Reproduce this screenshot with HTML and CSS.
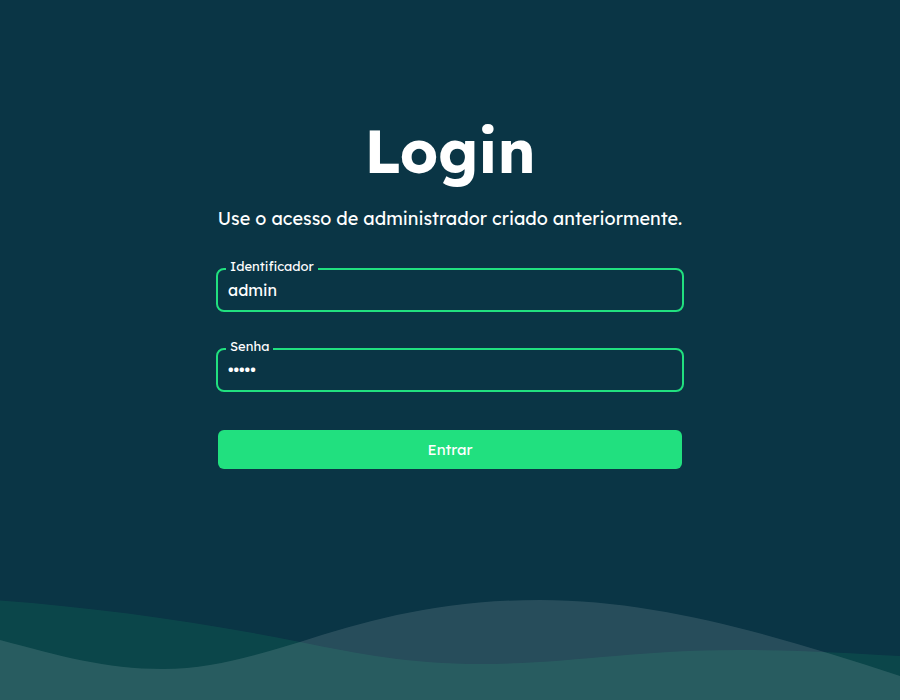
FILE: index.html
```html
<!DOCTYPE html>
<html lang="pt-BR">
<head>
<meta charset="utf-8">
<meta name="viewport" content="width=device-width, initial-scale=1">
<title>Login</title>
<link rel="stylesheet" href="styles.css">
</head>
<body>
<main class="login">
  <h1 class="title">Login</h1>
  <p class="subtitle">Use o acesso de administrador criado anteriormente.</p>
  <form class="form">
    <div class="field">
      <label class="field-label" for="user">Identificador</label>
      <input class="field-input" id="user" type="text" value="admin">
    </div>
    <div class="field">
      <label class="field-label" for="password">Senha</label>
      <input class="field-input" id="password" type="password" value="admin">
    </div>
    <button class="submit" type="button">Entrar</button>
  </form>
</main>
<svg class="waves" viewBox="0 0 900 100" preserveAspectRatio="none" aria-hidden="true">
  <path class="wave-green" d="M0,0.5C100,8 200,22 300,42C360,54 410,64 480,64C570,64 630,50 740,50C800,50 850,53 900,56V100H0Z"/>
  <path class="wave-light" d="M0,40C60,56 105,69 163,69C210,69 250,57 300,42C370,20 440,0 540,0C660,0 780,37 900,76V100H0Z"/>
</svg>
</body>
</html>
```
FILE: styles.css
```css
:root {
  --background: #0a3545;
  --accent: #21e07f;
}

* {
  box-sizing: border-box;
}

body {
  display: flex;
  flex-direction: column;
  align-items: center;
  min-height: 100vh;
  margin: 0;
  background: var(--background);
  color: #fff;
  font-family: Lexend, Inter, sans-serif;
}

.login {
  flex: 1;
  width: 100%;
  max-width: 468px;
  padding-top: 113px;
}

.title {
  margin: 0;
  font-size: 60px;
  line-height: 76px;
  font-weight: 700;
  text-align: center;
}

.subtitle {
  margin: 18px 0 0;
  font-size: 18px;
  line-height: 24px;
  text-align: center;
  white-space: nowrap;
}

.form {
  display: flex;
  flex-direction: column;
  gap: 36px;
  margin-top: 37px;
}

.field {
  position: relative;
}

.field-label {
  position: absolute;
  top: -10px;
  left: 10px;
  padding: 0 4px;
  background: var(--background);
  font-size: 13px;
  line-height: 16px;
}

.field-input {
  display: block;
  width: 100%;
  height: 44px;
  padding: 0 10px;
  border: 2px solid var(--accent);
  border-radius: 8px;
  outline: none;
  background: transparent;
  color: inherit;
  font: inherit;
  font-size: 16px;
}

.submit {
  height: 39px;
  margin: 2px 2px 0;
  border: 0;
  border-radius: 6px;
  background: var(--accent);
  color: #fff;
  font: inherit;
  font-size: 15px;
}

.waves {
  display: block;
  width: 100%;
  height: 100px;
}

.wave-green {
  fill: var(--accent);
  fill-opacity: 0.1;
}

.wave-light {
  fill: #fff;
  fill-opacity: 0.12;
}
```
